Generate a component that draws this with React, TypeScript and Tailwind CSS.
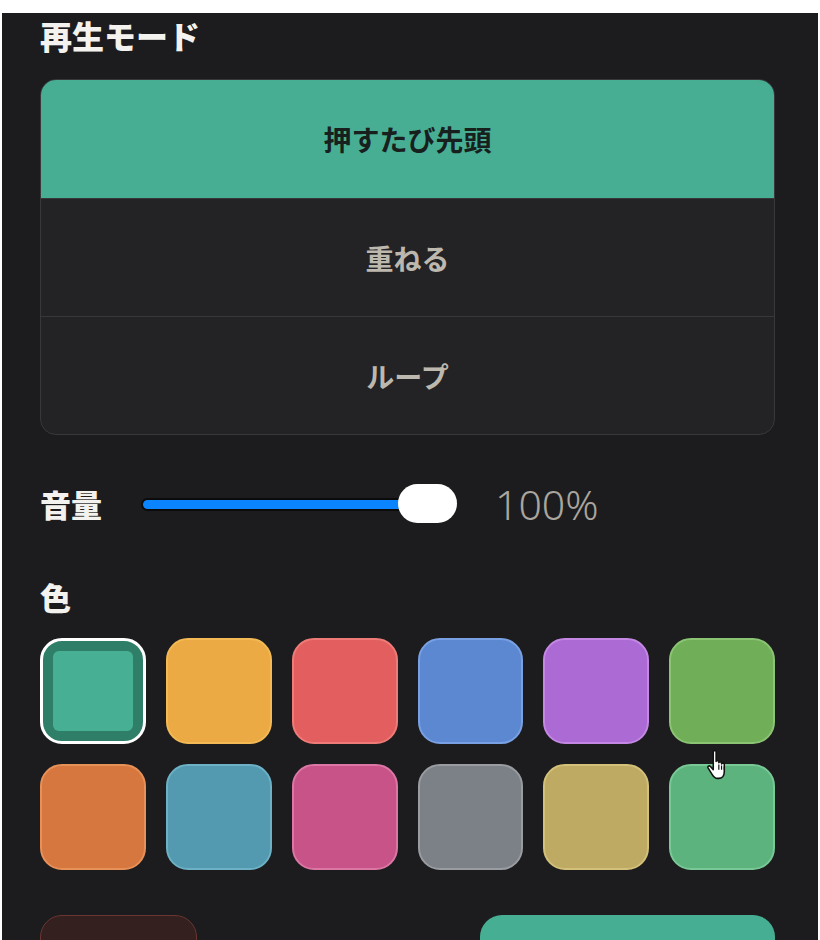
import { useState } from "react";

type Swatch = { fill: string; edge: string };

const MODES = ["押すたび先頭", "重ねる", "ループ"];

// fill + lighter rim, in the order shown
const SWATCHES: Swatch[] = [
  { fill: "#47b094", edge: "#2f7f68" },
  { fill: "#ebaa43", edge: "#f3b955" },
  { fill: "#e35f5f", edge: "#ef7b78" },
  { fill: "#5c88d2", edge: "#79a0e3" },
  { fill: "#ab6ad4", edge: "#c487e4" },
  { fill: "#70ae58", edge: "#8bc574" },
  { fill: "#d5773f", edge: "#e79159" },
  { fill: "#5399af", edge: "#6cb1c5" },
  { fill: "#c75388", edge: "#dc76a4" },
  { fill: "#7c8087", edge: "#999ca1" },
  { fill: "#bfaa64", edge: "#d3c079" },
  { fill: "#5cb37d", edge: "#79c996" },
];

const JP = { fontFamily: '"Noto Sans CJK JP", "Noto Sans", sans-serif' };

function HandCursor() {
  return (
    <svg
      className="pointer-events-none absolute left-[704px] top-[736px]"
      width="24"
      height="32"
      viewBox="0 0 20 27"
    >
      <path
        d="M6 2.2c0-1.1 2.4-1.1 2.4 0v8.4c0-1 2.3-1 2.3 0v1c0-1 2.3-1 2.3 0v1c0-1 2.3-1 2.3 0v6.6c0 3-1.6 5.6-4.8 5.6H9.6c-2.4 0-3.4-1.4-4.6-3.4L1.6 16c-.7-1.3 1-2.4 2-1.3L6 17.4Z"
        fill="#fff"
        stroke="#111"
        strokeWidth="1.3"
        strokeLinejoin="round"
      />
      <path d="M10.7 13v4.6M13 14v3.6M15.3 15v2.6" stroke="#111" strokeWidth="1" />
    </svg>
  );
}

export default function App() {
  const [mode, setMode] = useState(0);
  const [color, setColor] = useState(0);

  return (
    <div className="min-h-[940px] bg-white px-[2px] pt-[13px]" style={JP}>
      <div className="relative min-h-[927px] bg-[#1c1c1e] pl-[38px] pr-[43px] pt-[2px]">
        <h2 className="text-[32px] font-black leading-[40px] text-[#f4f2ee]">再生モード</h2>

        <div className="mt-[24px] overflow-hidden rounded-[16px] border border-[#38383b] bg-[#232326]">
          {MODES.map((m, i) => (
            <button
              key={m}
              onClick={() => setMode(i)}
              className={
                "flex h-[118px] w-full items-center justify-center text-[28px] font-bold " +
                (i > 0 ? "border-t border-[#37373a] " : "") +
                (mode === i ? "bg-[#47ae93] text-[#18201d]" : "text-[#bdb8ae]")
              }
            >
              {m}
            </button>
          ))}
        </div>

        {/* volume */}
        <div className="mt-[49px] flex h-[40px] items-center">
          <span className="w-[101px] text-[31px] font-black leading-[40px] text-[#f4f2ee]">音量</span>
          <div className="relative flex h-[40px] w-[316px] items-center">
            <div className="h-[13px] w-[290px] rounded-full border-2 border-[#0b0b0c] bg-[#0a84ff]" />
            <div className="absolute right-0 top-0 h-[39px] w-[59px] rounded-full bg-white" />
          </div>
          <span
            className="ml-[38px] text-[41px] font-light leading-[40px] text-[#aaa69e]"
            style={{ fontFamily: '"Noto Sans", "Open Sans", sans-serif' }}
          >
            100%
          </span>
        </div>

        <div className="mt-[53px] text-[31px] font-black leading-[40px] text-[#f4f2ee]">色</div>

        <div className="mt-[21px] grid grid-cols-6 gap-x-[20px] gap-y-[20px]">
          {SWATCHES.map((s, i) =>
            color === i ? (
              <button
                key={i}
                onClick={() => setColor(i)}
                className="h-[106px] rounded-[22px] border-[3px] border-white p-[10px]"
                style={{ background: s.edge }}
              >
                <div className="h-full w-full rounded-[6px]" style={{ background: s.fill }} />
              </button>
            ) : (
              <button
                key={i}
                onClick={() => setColor(i)}
                className="h-[106px] rounded-[22px] border-2"
                style={{ background: s.fill, borderColor: s.edge }}
              />
            ),
          )}
        </div>

        <div className="mt-[45px] flex justify-between">
          <button className="h-[70px] w-[157px] rounded-[22px] border-[1.5px] border-[#6b3530] bg-[#33201f]" />
          <button className="h-[70px] w-[295px] rounded-[22px] bg-[#46ae93]" />
        </div>

        <HandCursor />
      </div>
    </div>
  );
}
